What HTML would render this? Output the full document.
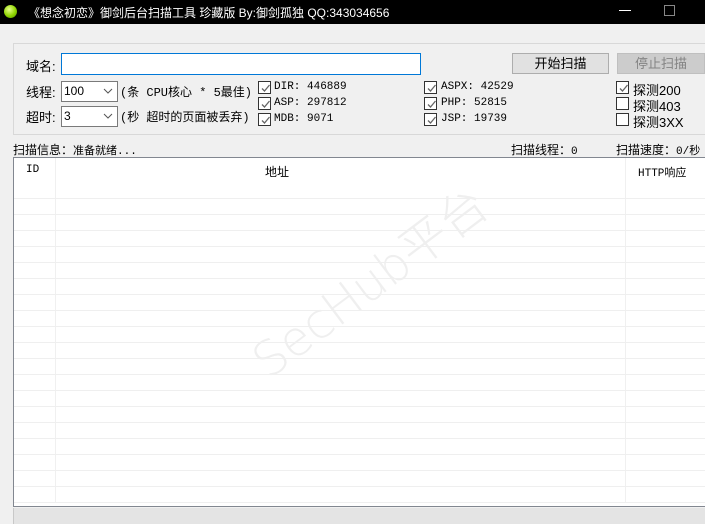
<!DOCTYPE html>
<html><head><meta charset="utf-8"><style>
*{margin:0;padding:0;box-sizing:border-box}
body{width:705px;height:524px;background:#f0f0f0;position:relative;overflow:hidden;font-family:"Liberation Sans","Noto Sans CJK SC",sans-serif;font-size:12px;color:#000}
.a{position:absolute;white-space:nowrap}
.mono{font-family:"Liberation Mono","Noto Sans CJK SC",monospace;font-size:11px}
.cb{position:absolute;width:13px;height:13px;border:1px solid #333;background:#fff}
.cb svg{position:absolute;left:1px;top:1px}
.combo{position:absolute;background:#fff;border:1px solid #7a7a7a;height:21px;width:57px;padding:2px 0 0 2px}
.hl{position:absolute;left:14px;width:691px;height:1px;background:#efefef}
</style></head><body>
<div class="a" style="left:0;top:0;width:705px;height:24px;background:#000"></div>
<div class="a" style="left:4px;top:5px;width:13px;height:13px;border-radius:50%;background:radial-gradient(circle at 40% 35%,#e8ff8a,#8fd400 55%,#4e8f00)"></div>
<div class="a" style="left:28px;top:4px;color:#fff;font-size:12px">《想念初恋》御剑后台扫描工具 珍藏版 By:御剑孤独 QQ:343034656</div>
<div class="a" style="left:619px;top:10px;width:12px;height:1px;background:#fff"></div>
<div class="a" style="left:664px;top:5px;width:11px;height:11px;border:1px solid #888"></div>

<div class="a" style="left:13px;top:43px;width:692px;height:92px;border-top:1px solid #d8d8d8;border-left:1px solid #d8d8d8;border-bottom:1px solid #d8d8d8"></div>
<div class="a" style="left:26px;top:56px;font-size:13px">域名:</div>
<div class="a" style="left:61px;top:53px;width:360px;height:22px;border:1px solid #0078d7;background:#fff"></div>
<div class="a" style="left:512px;top:53px;width:97px;height:21px;border:1px solid #adadad;background:#e1e1e1;text-align:center;line-height:19px;font-size:13px">开始扫描</div>
<div class="a" style="left:617px;top:53px;width:88px;height:21px;border:1px solid #bfbfbf;background:#cccccc;text-align:center;line-height:19px;font-size:13px;color:#838383">停止扫描</div>

<div class="a" style="left:26px;top:82px;font-size:13px">线程:</div>
<div class="combo" style="left:61px;top:81px">100</div>
<div class="a" style="left:26px;top:107px;font-size:13px">超时:</div>
<div class="combo" style="left:61px;top:106px">3</div>
<svg class="a" style="left:103px;top:88px" width="10" height="6"><path d="M1 1L5 5L9 1" stroke="#555" fill="none"/></svg>
<svg class="a" style="left:103px;top:113px" width="10" height="6"><path d="M1 1L5 5L9 1" stroke="#555" fill="none"/></svg>
<div class="a mono" style="left:120px;top:83px;font-size:12px">(条 CPU核心 * 5最佳)</div>
<div class="a mono" style="left:120px;top:108px;font-size:12px">(秒 超时的页面被丢弃)</div>

<div class="cb" style="left:258px;top:81px"><svg width="11" height="11"><path d="M2 5.5L4.5 8L9.5 2" stroke="#666" stroke-width="1.3" fill="none"/></svg></div>
<div class="cb" style="left:258px;top:97px"><svg width="11" height="11"><path d="M2 5.5L4.5 8L9.5 2" stroke="#666" stroke-width="1.3" fill="none"/></svg></div>
<div class="cb" style="left:258px;top:113px"><svg width="11" height="11"><path d="M2 5.5L4.5 8L9.5 2" stroke="#666" stroke-width="1.3" fill="none"/></svg></div>
<div class="a mono" style="left:274px;top:81px">DIR: 446889</div>
<div class="a mono" style="left:274px;top:97px">ASP: 297812</div>
<div class="a mono" style="left:274px;top:113px">MDB: 9071</div>
<div class="cb" style="left:424px;top:81px"><svg width="11" height="11"><path d="M2 5.5L4.5 8L9.5 2" stroke="#666" stroke-width="1.3" fill="none"/></svg></div>
<div class="cb" style="left:424px;top:97px"><svg width="11" height="11"><path d="M2 5.5L4.5 8L9.5 2" stroke="#666" stroke-width="1.3" fill="none"/></svg></div>
<div class="cb" style="left:424px;top:113px"><svg width="11" height="11"><path d="M2 5.5L4.5 8L9.5 2" stroke="#666" stroke-width="1.3" fill="none"/></svg></div>
<div class="a mono" style="left:441px;top:81px">ASPX: 42529</div>
<div class="a mono" style="left:441px;top:97px">PHP: 52815</div>
<div class="a mono" style="left:441px;top:113px">JSP: 19739</div>
<div class="cb" style="left:616px;top:81px"><svg width="11" height="11"><path d="M2 5.5L4.5 8L9.5 2" stroke="#666" stroke-width="1.3" fill="none"/></svg></div>
<div class="cb" style="left:616px;top:97px"></div>
<div class="cb" style="left:616px;top:113px"></div>
<div class="a" style="left:633px;top:80px;font-size:13px">探测200</div>
<div class="a" style="left:633px;top:96px;font-size:13px">探测403</div>
<div class="a" style="left:633px;top:112px;font-size:13px">探测3XX</div>

<div class="a" style="left:13px;top:141px;font-size:12px">扫描信息：<span class="mono">准备就绪...</span></div>
<div class="a" style="left:511px;top:141px">扫描线程：<span class="mono">0</span></div>
<div class="a" style="left:616px;top:141px">扫描速度：<span class="mono">0/秒</span></div>

<div class="a" style="left:13px;top:157px;width:692px;height:350px;background:#fff;border-top:1px solid #828790;border-left:1px solid #828790;border-bottom:1px solid #828790"></div>
<div class="a" style="left:55px;top:158px;width:1px;height:344px;background:#f0f0f0"></div>
<div class="a" style="left:625px;top:158px;width:1px;height:344px;background:#f0f0f0"></div>
<div class="a mono" style="left:26px;top:164px">ID</div>
<div class="a" style="left:265px;top:163px">地址</div>
<div class="a mono" style="left:638px;top:164px">HTTP响应</div>
<div class="hl" style="top:198px"></div><div class="hl" style="top:214px"></div><div class="hl" style="top:230px"></div><div class="hl" style="top:246px"></div><div class="hl" style="top:262px"></div><div class="hl" style="top:278px"></div><div class="hl" style="top:294px"></div><div class="hl" style="top:310px"></div><div class="hl" style="top:326px"></div><div class="hl" style="top:342px"></div><div class="hl" style="top:358px"></div><div class="hl" style="top:374px"></div><div class="hl" style="top:390px"></div><div class="hl" style="top:406px"></div><div class="hl" style="top:422px"></div><div class="hl" style="top:438px"></div><div class="hl" style="top:454px"></div><div class="hl" style="top:470px"></div><div class="hl" style="top:486px"></div><div class="hl" style="top:502px"></div>
<div class="a" style="left:228px;top:244px;font-size:48px;font-family:'DejaVu Sans','Noto Sans CJK SC',sans-serif;font-weight:300;color:#efefef;transform:rotate(-37deg);transform-origin:center">SecHub平台</div>
<div class="a" style="left:13px;top:508px;width:692px;height:16px;background:#e4e4e4;border-left:1px solid #c8c8c8"></div>
</body></html>
